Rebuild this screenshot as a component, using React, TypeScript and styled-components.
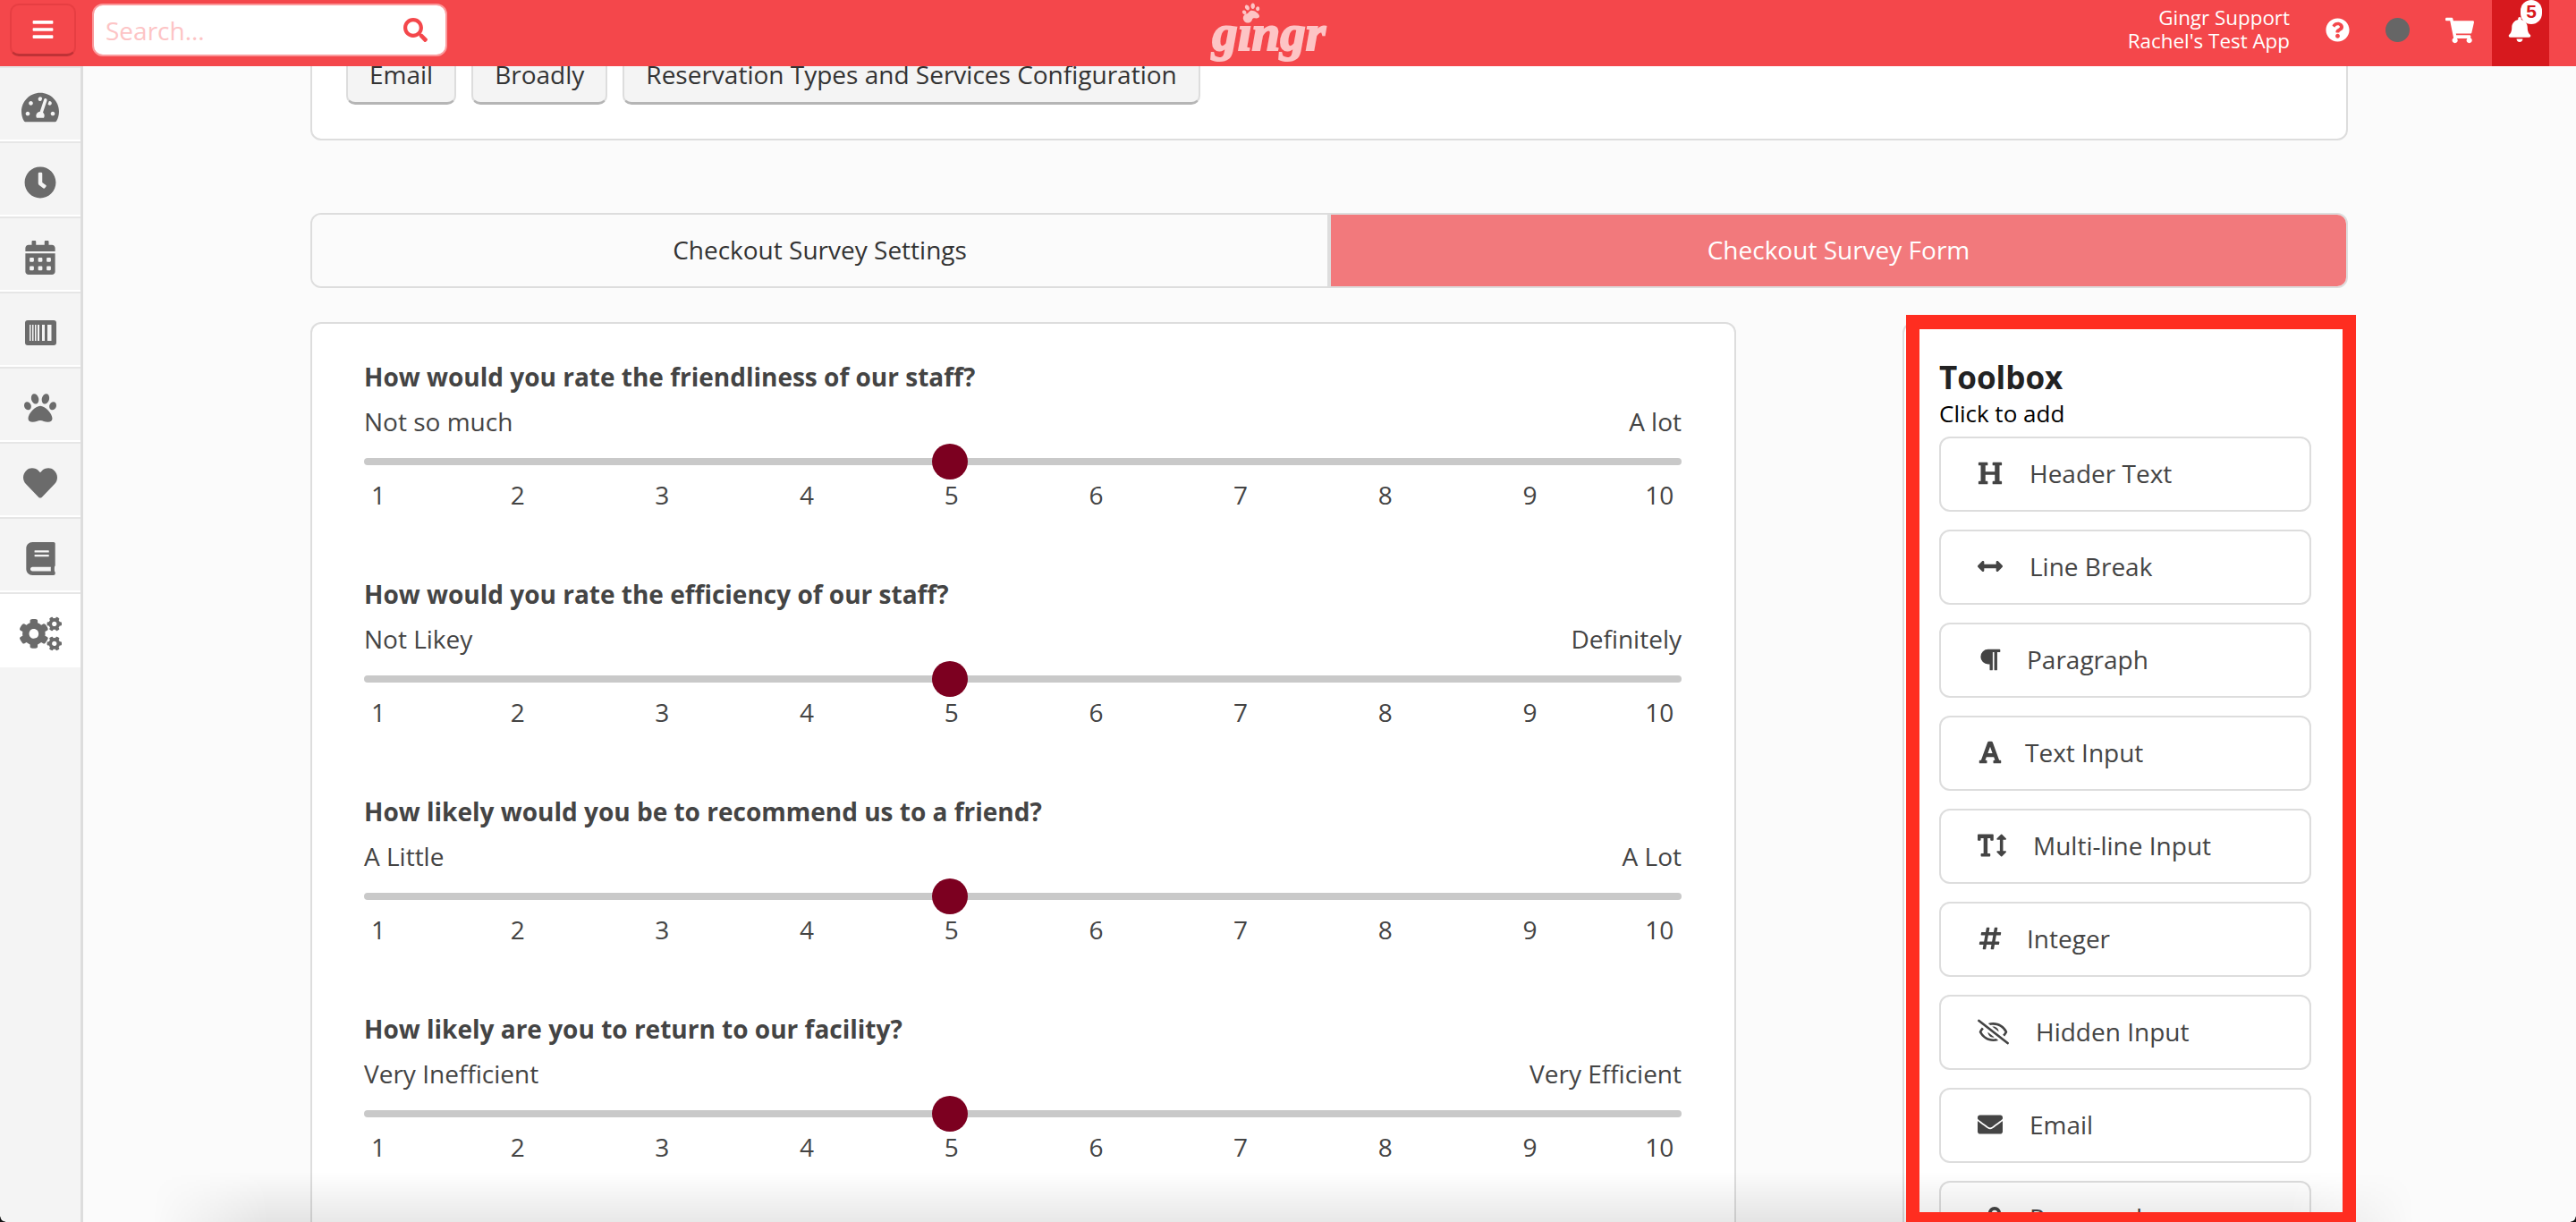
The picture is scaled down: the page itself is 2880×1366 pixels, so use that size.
import React from "react";
import styled, { createGlobalStyle } from "styled-components";
import {
  FaArrowsAltH,
  FaBars,
  FaBell,
  FaBook,
  FaCalendarAlt,
  FaClock,
  FaCogs,
  FaEnvelope,
  FaFont,
  FaHashtag,
  FaHeading,
  FaHeart,
  FaLock,
  FaParagraph,
  FaPaw,
  FaQuestionCircle,
  FaRegEyeSlash,
  FaSearch,
  FaShoppingCart,
  FaTachometerAlt,
  FaTextHeight,
} from "react-icons/fa";

const GlobalStyle = createGlobalStyle`
  html, body {
    margin: 0;
    padding: 0;
    height: 100%;
    background: #fbfbfb;
    font-family: "Open Sans", "Liberation Sans", sans-serif;
  }
  * { box-sizing: border-box; }
`;

const BarcodeIcon = () => (
  <svg width="35" height="28" viewBox="0 0 35 28">
    <rect width="35" height="28" rx="3" fill="#6b6b6b" />
    <g fill="#f4f4f4">
      <rect x="5" y="5" width="1.5" height="18" />
      <rect x="8" y="5" width="1.5" height="18" />
      <rect x="11" y="5" width="1.5" height="18" />
      <rect x="14" y="5" width="2" height="18" />
      <rect x="19" y="5" width="3" height="18" />
      <rect x="25" y="5" width="4.5" height="18" />
    </g>
  </svg>
);

const navItems = [
  <FaTachometerAlt size={42} />,
  <FaClock size={36} />,
  <FaCalendarAlt size={38} />,
  <BarcodeIcon />,
  <FaPaw size={36} />,
  <FaHeart size={38} />,
  <FaBook size={37} />,
  <FaCogs size={47} />,
];

const questions = [
  { title: "How would you rate the friendliness of our staff?", low: "Not so much", high: "A lot" },
  { title: "How would you rate the efficiency of our staff?", low: "Not Likey", high: "Definitely" },
  { title: "How likely would you be to recommend us to a friend?", low: "A Little", high: "A Lot" },
  { title: "How likely are you to return to our facility?", low: "Very Inefficient", high: "Very Efficient" },
];

const tools = [
  { label: "Header Text", icon: <FaHeading size={28} />, w: 58 },
  { label: "Line Break", icon: <FaArrowsAltH size={28} />, w: 58 },
  { label: "Paragraph", icon: <FaParagraph size={27} />, w: 55 },
  { label: "Text Input", icon: <FaFont size={28} />, w: 53 },
  { label: "Multi-line Input", icon: <FaTextHeight size={32} />, w: 62 },
  { label: "Integer", icon: <FaHashtag size={28} />, w: 55 },
  { label: "Hidden Input", icon: <FaRegEyeSlash size={35} />, w: 65 },
  { label: "Email", icon: <FaEnvelope size={28} />, w: 58 },
  { label: "Password", icon: <FaLock size={24} />, w: 58, indent: 7 },
];

export default function App() {
  return (
    <Page>
      <GlobalStyle />
      <TopBar>
        <MenuButton>
          <FaBars size={26} />
        </MenuButton>
        <SearchBox>
          <SearchInput placeholder="Search..." />
          <FaSearch size={27} color="#f4474b" />
        </SearchBox>
        <Logo>
          gingr
          <LogoPaw>
            <FaPaw size={20} />
          </LogoPaw>
        </Logo>
        <UserInfo>
          <div>Gingr Support</div>
          <div>Rachel's Test App</div>
        </UserInfo>
        <HelpIcon>
          <FaQuestionCircle size={27} />
        </HelpIcon>
        <StatusDot />
        <CartIcon>
          <FaShoppingCart size={32} />
        </CartIcon>
        <BellCell>
          <FaBell size={28} />
          <BellBadge>5</BellBadge>
        </BellCell>
      </TopBar>

      <Body>
        <Sidebar>
          {navItems.map((icon, i) => (
            <NavItem key={i} $active={i === navItems.length - 1}>
              {icon}
            </NavItem>
          ))}
        </Sidebar>

        <Content>
          <LinksCard>
            <LinkButton>Email</LinkButton>
            <LinkButton>Broadly</LinkButton>
            <LinkButton>Reservation Types and Services Configuration</LinkButton>
          </LinksCard>

          <Tabs>
            <Tab>Checkout Survey Settings</Tab>
            <Tab $active>Checkout Survey Form</Tab>
          </Tabs>

          <Columns>
            <FormCard>
              {questions.map((q) => (
                <Question key={q.title}>
                  <QuestionTitle>{q.title}</QuestionTitle>
                  <ScaleLabels>
                    <span>{q.low}</span>
                    <span>{q.high}</span>
                  </ScaleLabels>
                  <Track>
                    <Thumb />
                  </Track>
                  <Ticks>
                    {[1, 2, 3, 4, 5, 6, 7, 8, 9, 10].map((n) => (
                      <Tick key={n}>{n}</Tick>
                    ))}
                  </Ticks>
                </Question>
              ))}
            </FormCard>

            <Toolbox>
              <ToolboxTitle>Toolbox</ToolboxTitle>
              <ToolboxHint>Click to add</ToolboxHint>
              <ToolList>
                {tools.map((t) => (
                  <ToolButton key={t.label}>
                    <IconSlot $w={t.w} $indent={t.indent || 0}>
                      {t.icon}
                    </IconSlot>
                    {t.label}
                  </ToolButton>
                ))}
              </ToolList>
              <HighlightFrame />
            </Toolbox>
          </Columns>
        </Content>
      </Body>

      <WindowShadow />
      <CornerLeft />
      <CornerRight />
    </Page>
  );
}

const Page = styled.div`
  position: relative;
  height: 100vh;
  display: flex;
  flex-direction: column;
  overflow: hidden;
  background: #fbfbfb;
`;

const TopBar = styled.header`
  position: relative;
  z-index: 5;
  flex: 0 0 74px;
  height: 74px;
  display: flex;
  align-items: center;
  padding: 0 30px 0 11px;
  background: #f4474b;
  color: #fff;
`;

const MenuButton = styled.button`
  width: 74px;
  height: 59px;
  margin-bottom: 7px;
  display: flex;
  align-items: center;
  justify-content: center;
  padding: 0;
  color: #fff;
  background: #f4474b;
  border: 2px solid #e63e42;
  border-bottom: 3px solid #bf3236;
  border-radius: 10px;
`;

const SearchBox = styled.div`
  width: 397px;
  height: 59px;
  margin: 0 0 7px 18px;
  display: flex;
  align-items: center;
  padding: 0 20px 0 13px;
  background: #fff;
  border: 2px solid #fb9a9c;
  border-radius: 12px;
`;

const SearchInput = styled.input`
  flex: 1;
  min-width: 0;
  border: 0;
  outline: 0;
  padding: 0;
  background: transparent;
  font: 28px "Open Sans", sans-serif;
  &::placeholder {
    color: #fdc4c5;
    opacity: 1;
  }
`;

const Logo = styled.div`
  position: relative;
  margin-left: 852px;
  width: 133px;
  text-align: center;
  font: italic 700 57px/72px "Liberation Serif", serif;
  color: #fdc4c5;
  -webkit-text-stroke: 2px #fdc4c5;
`;

const LogoPaw = styled.span`
  position: absolute;
  left: 37px;
  top: 2px;
  color: #fdc4c5;
  -webkit-text-stroke: 0;
  line-height: 0;
  transform: rotate(-15deg);
`;

const UserInfo = styled.div`
  margin-left: auto;
  margin-right: 40px;
  margin-bottom: 8px;
  text-align: right;
  font-size: 22.4px;
  line-height: 26px;
`;

const HelpIcon = styled.span`
  display: flex;
  margin: 0 40px 7px 0;
`;

const StatusDot = styled.span`
  width: 27px;
  height: 27px;
  margin: 0 40px 7px 0;
  border-radius: 50%;
  background: #666;
`;

const CartIcon = styled.span`
  display: flex;
  margin: 0 20px 7px 0;
`;

const BellCell = styled.div`
  position: relative;
  width: 64px;
  height: 74px;
  padding: 19px 0 0 17px;
  background: #d7191e;
`;

const BellBadge = styled.span`
  position: absolute;
  left: 32px;
  top: 0;
  width: 24px;
  height: 27px;
  border-radius: 12px;
  background: #fff;
  color: #d7191e;
  text-align: center;
  font: 700 21px/25px "Liberation Sans", sans-serif;
`;

const Body = styled.div`
  flex: 1;
  min-height: 0;
  display: flex;
`;

const Sidebar = styled.nav`
  flex: 0 0 93px;
  background: #f4f4f4;
  border-right: 3px solid #ddd;
`;

const NavItem = styled.div<{ $active?: boolean }>`
  height: 84px;
  display: flex;
  align-items: center;
  justify-content: center;
  padding-top: 8px;
  color: #6b6b6b;
  background: ${(p) => (p.$active ? "#fff" : "#f4f4f4")};
  border-top: 2px solid #e6e6e6;
  border-bottom: 2px solid #fff;
`;

const Content = styled.main`
  flex: 1;
  min-width: 0;
  padding: 0 255px 0 254px;
  overflow: hidden;
`;

const LinksCard = styled.section`
  height: 123px;
  margin-top: -40px;
  display: flex;
  gap: 17px;
  padding: 15px 38px 0;
  background: #fff;
  border: 2px solid #ddd;
  border-radius: 12px;
`;

const LinkButton = styled.button`
  height: 66px;
  padding: 0 24px 1px;
  background: #f4f4f4;
  border: 2px solid #ddd;
  border-bottom: 3px solid #b5b5b5;
  border-radius: 10px;
  color: #333;
  font: 28px "Open Sans", sans-serif;
  white-space: nowrap;
`;

const Tabs = styled.div`
  height: 84px;
  margin-top: 81px;
  display: flex;
  overflow: hidden;
  border: 2px solid #ddd;
  border-radius: 12px;
`;

const Tab = styled.div<{ $active?: boolean }>`
  flex: 1;
  display: flex;
  align-items: center;
  justify-content: center;
  padding-bottom: 2px;
  font-size: 28px;
  color: ${(p) => (p.$active ? "#fff" : "#333")};
  background: ${(p) => (p.$active ? "#f2797c" : "#fbfbfb")};
  border-left: ${(p) => (p.$active ? "4px solid #ddd" : "0")};
`;

const Columns = styled.div`
  margin-top: 38px;
  display: grid;
  grid-template-columns: 1594px 498px;
  justify-content: space-between;
  align-items: start;
`;

const FormCard = styled.section`
  padding: 34px 59px 40px 58px;
  background: #fff;
  border: 2px solid #ddd;
  border-radius: 12px;
`;

const Question = styled.div`
  height: 243px;
  color: #444;
`;

const QuestionTitle = styled.div`
  font-size: 28px;
  font-weight: 700;
  line-height: 50px;
`;

const ScaleLabels = styled.div`
  display: flex;
  justify-content: space-between;
  font-size: 28px;
  line-height: 50px;
`;

const Track = styled.div`
  position: relative;
  height: 8px;
  margin-top: 16px;
  border-radius: 4px;
  background: #c9c9c9;
`;

const Thumb = styled.span`
  position: absolute;
  left: 635px;
  top: -16px;
  width: 40px;
  height: 40px;
  border-radius: 50%;
  background: #7c0020;
`;

const Ticks = styled.div`
  display: flex;
  gap: 121.7px;
  margin-top: 13px;
  font-size: 28px;
  line-height: 40px;
`;

const Tick = styled.span`
  flex: 0 0 40px;
  text-align: center;
  &:first-child {
    flex-basis: 32px;
    margin-right: -2px;
  }
  &:last-child {
    flex-basis: 48px;
    margin-left: -21px;
  }
`;

const Toolbox = styled.aside`
  position: relative;
  padding: 38px 39px 0;
  background: #fff;
  border: 2px solid #ddd;
  border-radius: 12px;
`;

const ToolboxTitle = styled.div`
  font-size: 35px;
  font-weight: 700;
  line-height: 44px;
  color: #222;
`;

const ToolboxHint = styled.div`
  font-size: 26px;
  line-height: 36px;
  color: #000;
`;

const ToolList = styled.div`
  display: flex;
  flex-direction: column;
  gap: 20px;
  margin-top: 8px;
  margin-bottom: 40px;
`;

const ToolButton = styled.div`
  width: 416px;
  height: 84px;
  display: flex;
  align-items: center;
  padding: 0 0 2px 41px;
  background: #fff;
  border: 2px solid #ddd;
  border-radius: 12px;
  color: #444;
  font-size: 28px;
`;

const IconSlot = styled.span<{ $w: number; $indent: number }>`
  flex: 0 0 ${(p) => p.$w}px;
  display: flex;
  align-items: center;
  padding-left: ${(p) => p.$indent}px;
`;

const HighlightFrame = styled.div`
  position: absolute;
  z-index: 4;
  left: 2px;
  top: -10px;
  width: 503px;
  height: 1014px;
  border: solid #ff2d20;
  border-width: 16px 15px 11px;
  pointer-events: none;
`;

const WindowShadow = styled.div`
  position: absolute;
  z-index: 3;
  left: 0;
  right: 0;
  bottom: 0;
  height: 56px;
  background: linear-gradient(to top, rgba(0, 0, 0, 0.09), rgba(0, 0, 0, 0));
  mask-image: linear-gradient(to right, transparent 170px, #000 300px, #000 2560px, transparent 2700px);
  pointer-events: none;
`;

const CornerLeft = styled.span`
  position: absolute;
  z-index: 6;
  left: 0;
  bottom: 0;
  width: 6px;
  height: 6px;
  background: radial-gradient(circle at top right, transparent 5px, #111 6px);
`;

const CornerRight = styled.span`
  position: absolute;
  z-index: 6;
  right: 0;
  bottom: 0;
  width: 6px;
  height: 6px;
  background: radial-gradient(circle at top left, transparent 5px, #111 6px);
`;
